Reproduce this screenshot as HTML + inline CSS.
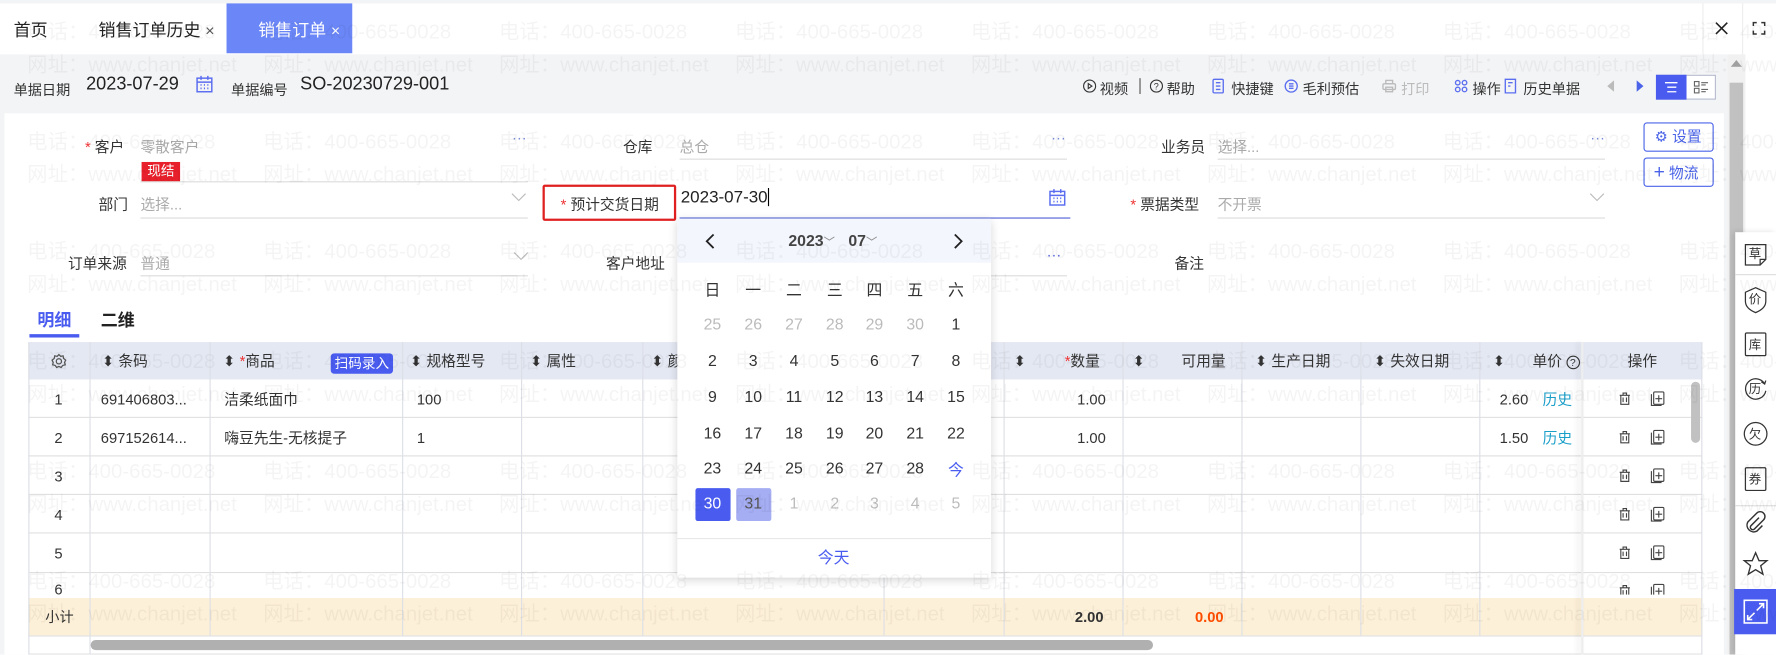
<!DOCTYPE html>
<html><head><meta charset="utf-8">
<style>
*{box-sizing:border-box;margin:0;padding:0}
html,body{width:1776px;height:654px;overflow:hidden;background:#fff}
body{font-family:"Liberation Sans","Noto Sans CJK SC",sans-serif;color:#333}
#w{position:absolute;left:0;top:0;width:1568px;height:578px;transform:scale(1.132653);transform-origin:0 0;overflow:hidden;background:#fff}
.a{position:absolute;white-space:nowrap}
.lbl{font-size:13px;color:#333}
.val{font-size:13px;color:#aaa}
.ul{position:absolute;height:1px;background:#dcdcdc}
.wm{position:absolute;left:0;width:1700px;font-size:18px;color:rgba(0,0,0,0.045);white-space:nowrap;pointer-events:none;z-index:50}
.wm span{display:inline-block;width:208.3px}
.th{position:absolute;top:302px;height:33px;font-size:13px;color:#333;line-height:33px}
.vl{position:absolute;width:1px;background:#dcdfe6}
.hl{position:absolute;height:1px;background:#e0e0e0}
.cd{position:absolute;width:30px;text-align:center;font-size:14px;color:#333}
.gr{color:#bbb}
.tb{font-size:12.5px;color:#333;position:absolute;top:68px}
.r{font-size:13px;line-height:16px;height:16px}
</style></head><body><div id="w">

<div class="a" style="left:0;top:0;width:1568px;height:3px;background:#f3f4f6"></div>
<div class="a" style="left:12px;top:16px;font-size:15px;color:#222">首页</div>
<div class="a" style="left:87px;top:16px;font-size:15px;color:#222">销售订单历史 <span style="font-size:14px;color:#555">×</span></div>
<div class="a" style="left:200px;top:3px;width:111px;height:44px;background:#6b86f7"></div>
<div class="a" style="left:228px;top:16px;font-size:15px;color:#fff">销售订单 <span style="font-size:14px">×</span></div>
<div class="a" style="left:1503px;top:3px;width:1px;height:45px;background:#eee"></div>
<div class="a" style="left:1538px;top:3px;width:1px;height:45px;background:#eee"></div>
<svg class="a" style="left:1514px;top:19px" width="12" height="12"><path d="M1 1L11 11M11 1L1 11" stroke="#222" stroke-width="1.4"/></svg>
<svg class="a" style="left:1547px;top:19px" width="12" height="12" fill="none" stroke="#333" stroke-width="1.3"><path d="M1 4V1H4M8 1H11V4M11 8V11H8M4 11H1V8"/></svg>

<div class="a" style="left:0;top:48px;width:1525px;height:530px;background:#f3f4f6"></div>
<div class="a lbl" style="left:12px;top:69px;font-size:12.5px">单据日期</div>
<div class="a" style="left:76px;top:66px;font-size:16px;color:#222">2023-07-29</div>
<svg class="a" style="left:173px;top:66px" width="15" height="16" fill="none" stroke="#5b6ef0" stroke-width="1.3"><rect x="1" y="3" width="13" height="12"/><path d="M1 6.5H14M4.5 1V4.5M10.5 1V4.5"/><path d="M4 9h1M7 9h1M10 9h1M4 12h1M7 12h1M10 12h1" stroke-width="1.5"/></svg>
<div class="ul" style="left:76px;top:103px;width:114px;background:#ccc"></div>
<div class="a lbl" style="left:204px;top:69px;font-size:12.5px">单据编号</div>
<div class="a" style="left:265px;top:66px;font-size:16px;color:#222">SO-20230729-001</div>

<svg class="a" style="left:956px;top:70px" width="12" height="12" fill="none" stroke="#333"><circle cx="6" cy="6" r="5.3"/><path d="M4.8 3.8L8 6 4.8 8.2Z"/></svg>
<div class="tb" style="left:971px">视频</div>
<div class="a" style="left:1006px;top:69px;width:1px;height:14px;background:#555"></div>
<svg class="a" style="left:1015px;top:70px" width="12" height="12" fill="none" stroke="#333"><circle cx="6" cy="6" r="5.3"/><text x="3.6" y="9" font-size="8" fill="#333" stroke="none">?</text></svg>
<div class="tb" style="left:1030px">帮助</div>
<svg class="a" style="left:1070px;top:69px" width="11" height="14" fill="none" stroke="#5b6ef0" stroke-width="1.2"><rect x="1" y="1" width="9" height="12" rx="1"/><path d="M3.5 4h4M3.5 7h4M3.5 10h4"/></svg>
<div class="tb" style="left:1087px">快捷键</div>
<svg class="a" style="left:1134px;top:70px" width="12" height="12" fill="none" stroke="#5b6ef0" stroke-width="1.2"><circle cx="6" cy="6" r="5.3"/><path d="M4 4h4M4 6h4M4 8h4"/></svg>
<div class="tb" style="left:1150px">毛利预估</div>
<svg class="a" style="left:1220px;top:70px" width="13" height="12" fill="none" stroke="#bbb" stroke-width="1.2"><rect x="1" y="4" width="11" height="5" rx="1"/><rect x="3.5" y="1" width="6" height="3"/><rect x="3.5" y="7" width="6" height="4"/></svg>
<div class="tb" style="left:1237px;color:#bbb">打印</div>
<svg class="a" style="left:1284px;top:70px" width="12" height="12" fill="none" stroke="#5b6ef0" stroke-width="1.2"><circle cx="3" cy="3" r="2"/><circle cx="9" cy="3" r="2"/><circle cx="3" cy="9" r="2"/><circle cx="9" cy="9" r="2"/></svg>
<div class="tb" style="left:1300px">操作</div>
<svg class="a" style="left:1328px;top:69px" width="11" height="14" fill="none" stroke="#5b6ef0" stroke-width="1.2"><path d="M1 1h9v12H1z M3.5 4h4M3.5 7h2"/></svg>
<div class="tb" style="left:1345px">历史单据</div>
<svg class="a" style="left:1418px;top:70px" width="8" height="12"><path d="M7 1L1 6 7 11Z" fill="#bbb"/></svg>
<svg class="a" style="left:1444px;top:70px" width="8" height="12"><path d="M1 1L7 6 1 11Z" fill="#4a63e8"/></svg>
<div class="a" style="left:1462px;top:66px;width:53px;height:22px;border:1px solid #b8bdd0;background:#fff"></div>
<div class="a" style="left:1462px;top:66px;width:27px;height:22px;background:#4a5cf0"></div>
<svg class="a" style="left:1469px;top:71px" width="13" height="12" stroke="#fff" stroke-width="1.2"><path d="M1 2h11M3 6h8M3 10h8"/></svg>
<svg class="a" style="left:1495px;top:71px" width="14" height="12" fill="none" stroke="#666" stroke-width="1"><rect x="1" y="1" width="4" height="4"/><rect x="1" y="7" width="4" height="4"/><path d="M7 2h6M7 4h4M7 8h6M7 10h4"/></svg>

<div class="a" style="left:1525px;top:48px;width:16px;height:530px;background:#f1f1f1"></div>
<svg class="a" style="left:1528px;top:53px" width="10" height="6"><path d="M0 6L5 0 10 6Z" fill="#a0a0a0"/></svg>
<div class="a" style="left:1527px;top:73px;width:12px;height:505px;background:#c1c1c1"></div>
<div class="a" style="left:1532px;top:205px;width:36px;height:373px;background:#fff;box-shadow:-2px 0 5px rgba(0,0,0,.12)"></div>
<div class="a" style="left:1532px;top:242px;width:36px;height:1px;background:#ddd"></div>
<div class="a" style="left:1532px;top:446px;width:36px;height:1px;background:#ddd"></div>
<svg class="a" style="left:1538px;top:213px" width="24" height="24" fill="none" stroke="#333" stroke-width="1.1"><path d="M3 3h18v13l-5 5H3z"/><path d="M16 21v-5h5"/><text x="6" y="15" font-size="11" fill="#333" stroke="none">草</text></svg>
<svg class="a" style="left:1538px;top:252px" width="24" height="26" fill="none" stroke="#333" stroke-width="1.1"><path d="M12 2l9 4v8c0 5-4 8-9 10-5-2-9-5-9-10V6z"/><text x="6" y="16" font-size="11" fill="#333" stroke="none">价</text></svg>
<svg class="a" style="left:1538px;top:292px" width="24" height="24" fill="none" stroke="#333" stroke-width="1.1"><rect x="3" y="2" width="18" height="20" rx="1"/><text x="6" y="16" font-size="11" fill="#333" stroke="none">库</text></svg>
<svg class="a" style="left:1538px;top:331px" width="24" height="24" fill="none" stroke="#333" stroke-width="1.1"><path d="M20 8a9 9 0 1 0 1 6"/><path d="M17 6l3 2 1-3"/><text x="6" y="16" font-size="11" fill="#333" stroke="none">历</text></svg>
<svg class="a" style="left:1538px;top:371px" width="24" height="24" fill="none" stroke="#333" stroke-width="1.1"><circle cx="12" cy="12" r="10"/><text x="6" y="16" font-size="11" fill="#333" stroke="none">欠</text></svg>
<svg class="a" style="left:1538px;top:411px" width="24" height="24" fill="none" stroke="#333" stroke-width="1.1"><rect x="3" y="2" width="18" height="20" rx="1"/><text x="6" y="16" font-size="11" fill="#333" stroke="none">券</text></svg>
<svg class="a" style="left:1538px;top:450px" width="24" height="24" fill="none" stroke="#333" stroke-width="1.3"><path d="M15 7l-7 7a2 2 0 0 0 3 3l8-8a4 4 0 0 0-6-6L5 11a6 6 0 0 0 8 8l5-5"/></svg>
<svg class="a" style="left:1538px;top:486px" width="24" height="24" fill="none" stroke="#333" stroke-width="1.2"><path d="M12 2l3 7h7l-5.5 4.5 2 7.5L12 17l-6.5 4 2-7.5L2 9h7z"/></svg>
<div class="a" style="left:1531px;top:520px;width:37px;height:40px;background:#4a5cf0"></div>
<svg class="a" style="left:1538px;top:528px" width="24" height="24" fill="none" stroke="#fff" stroke-width="1.4"><rect x="2" y="2" width="20" height="20"/><path d="M13 11l6-6M15 5h4v4M11 13l-6 6M5 15v4h4"/></svg>

<div class="a" style="left:4px;top:100px;width:1518px;height:478px;background:#fff"></div>

<div class="a lbl" style="left:75px;top:119px"><span style="color:#e33">*</span> 客户</div>
<div class="a val" style="left:124px;top:119px">零散客户</div>
<div class="a" style="left:452px;top:114px;color:#7a8bd8;font-size:13px">···</div>
<div class="ul" style="left:124px;top:160px;width:342px"></div>
<div class="a" style="left:125px;top:143px;width:34px;height:17px;background:#e8202b;color:#fff;font-size:12px;line-height:17px;text-align:center">现结</div>
<div class="a lbl" style="left:550px;top:119px">仓库</div>
<div class="a val" style="left:600px;top:119px">总仓</div>
<div class="a" style="left:928px;top:114px;color:#7a8bd8;font-size:13px">···</div>
<div class="ul" style="left:600px;top:140px;width:342px"></div>
<div class="a lbl" style="left:1025px;top:119px">业务员</div>
<div class="a val" style="left:1075px;top:119px">选择...</div>
<div class="a" style="left:1404px;top:114px;color:#7a8bd8;font-size:13px">···</div>
<div class="ul" style="left:1075px;top:140px;width:342px"></div>
<div class="a" style="left:1451px;top:108px;width:62px;height:26px;border:1px solid #4a63e8;border-radius:3px;color:#4a63e8;font-size:13px;line-height:24px;padding-left:9px">⚙ 设置</div>
<div class="a" style="left:1451px;top:139px;width:62px;height:26px;border:1px solid #4a63e8;border-radius:3px;color:#4a63e8;font-size:13px;line-height:24px;padding-left:8px"><span style="font-size:17px">+</span> 物流</div>

<div class="a lbl" style="left:87px;top:170px">部门</div>
<div class="a val" style="left:124px;top:170px">选择...</div>
<svg class="a" style="left:451px;top:170px" width="14" height="9"><path d="M1 1l6 6 6-6" fill="none" stroke="#bbb"/></svg>
<div class="ul" style="left:124px;top:192px;width:342px"></div>
<div class="a" style="left:479px;top:163px;width:118px;height:32px;border:2px solid #e02020;border-radius:2px"></div>
<div class="a lbl" style="left:495px;top:170px"><span style="color:#e33">*</span> 预计交货日期</div>
<div class="a" style="left:601px;top:166px;font-size:15px;color:#222">2023-07-30<span style="display:inline-block;width:1px;height:16px;background:#000;vertical-align:-3px"></span></div>
<svg class="a" style="left:926px;top:166px" width="15" height="16" fill="none" stroke="#5b6ef0" stroke-width="1.3"><rect x="1" y="3" width="13" height="12"/><path d="M1 6.5H14M4.5 1V4.5M10.5 1V4.5"/><path d="M4 9h1M7 9h1M10 9h1M4 12h1M7 12h1M10 12h1" stroke-width="1.5"/></svg>
<div class="ul" style="left:600px;top:192px;width:345px;background:#5060d8"></div>
<div class="a lbl" style="left:998px;top:170px"><span style="color:#e33">*</span> 票据类型</div>
<div class="a val" style="left:1075px;top:170px">不开票</div>
<svg class="a" style="left:1403px;top:170px" width="14" height="9"><path d="M1 1l6 6 6-6" fill="none" stroke="#bbb"/></svg>
<div class="ul" style="left:1075px;top:192px;width:342px"></div>

<div class="a lbl" style="left:60px;top:222px">订单来源</div>
<div class="a val" style="left:124px;top:222px">普通</div>
<svg class="a" style="left:453px;top:222px" width="14" height="9"><path d="M1 1l6 6 6-6" fill="none" stroke="#bbb"/></svg>
<div class="ul" style="left:124px;top:243px;width:342px"></div>
<div class="a lbl" style="left:535px;top:222px">客户地址</div>
<div class="a" style="left:924px;top:217px;color:#5060d8;font-size:13px">···</div>
<div class="ul" style="left:600px;top:243px;width:342px"></div>
<div class="a lbl" style="left:1037px;top:222px">备注</div>

<div class="a" style="left:33px;top:272px;font-size:15px;font-weight:bold;color:#4a5cf0">明细</div>
<div class="a" style="left:26px;top:295px;width:44px;height:3px;background:#4a5cf0"></div>
<div class="a" style="left:89px;top:272px;font-size:15px;font-weight:bold;color:#222">二维</div>

<div class="a" style="left:25px;top:302px;width:1478px;height:33px;background:#e4e8f3"></div>
<div class="a" style="left:25px;top:528px;width:1478px;height:33px;background:#fdf0d8"></div>
<div class="hl" style="left:25px;top:368px;width:1478px"></div>
<div class="hl" style="left:25px;top:402px;width:1478px"></div>
<div class="hl" style="left:25px;top:436px;width:1478px"></div>
<div class="hl" style="left:25px;top:470px;width:1478px"></div>
<div class="hl" style="left:25px;top:505px;width:1478px"></div>
<div class="hl" style="left:25px;top:561px;width:1478px"></div>
<div class="hl" style="left:25px;top:577px;width:1478px"></div>
<div class="vl" style="left:25px;top:302px;height:276px"></div>
<div class="vl" style="left:79px;top:302px;height:276px"></div>
<div class="vl" style="left:185px;top:302px;height:259px"></div>
<div class="vl" style="left:355px;top:302px;height:259px"></div>
<div class="vl" style="left:460px;top:302px;height:259px"></div>
<div class="vl" style="left:567px;top:302px;height:259px"></div>
<div class="vl" style="left:780px;top:302px;height:259px"></div>
<div class="vl" style="left:886px;top:302px;height:259px"></div>
<div class="vl" style="left:991px;top:302px;height:259px"></div>
<div class="vl" style="left:1096px;top:302px;height:259px"></div>
<div class="vl" style="left:1201px;top:302px;height:259px"></div>
<div class="vl" style="left:1306px;top:302px;height:259px"></div>
<div class="vl" style="left:1502px;top:302px;height:276px"></div>
<div class="a" style="left:1396px;top:302px;width:2px;height:276px;box-shadow:-3px 0 5px rgba(0,0,0,.1);background:#eee"></div>

<svg class="a" style="left:45px;top:312px" width="14" height="14" fill="none" stroke="#555" stroke-width="1.1"><circle cx="7" cy="7" r="2.3"/><path d="M7 1l1.5 1.6 2.2-.4.4 2.2L13 6l-1 2 .6 2.1-2.2.5L9 12.4 7 11.5 5 12.4l-1.3-1.8-2.2-.5L2 8 1 6l1.9-1.6.4-2.2 2.2.4z"/></svg>
<div class="th" style="left:90px">⬍ 条码</div>
<div class="th" style="left:197px">⬍ <span style="color:#e33">*</span>商品</div>
<div class="a" style="left:292px;top:312px;width:55px;height:18px;background:#4a5cf0;border-radius:3px;color:#fff;font-size:12px;line-height:18px;text-align:center">扫码录入</div>
<div class="th" style="left:362px">⬍ 规格型号</div>
<div class="th" style="left:468px">⬍ 属性</div>
<div class="th" style="left:575px">⬍ 颜</div>
<div class="th" style="left:895px">⬍</div>
<div class="th" style="left:940px"><span style="color:#e33">*</span>数量</div>
<div class="th" style="left:1000px">⬍</div>
<div class="th" style="left:1043px">可用量</div>
<div class="th" style="left:1108px">⬍ 生产日期</div>
<div class="th" style="left:1213px">⬍ 失效日期</div>
<div class="th" style="left:1318px">⬍</div>
<div class="th" style="left:1353px">单价 <span style="display:inline-block;width:12px;height:12px;border:1px solid #333;border-radius:50%;font-size:9px;line-height:10px;text-align:center;vertical-align:0">?</span></div>
<div class="th" style="left:1437px">操作</div>

<div class="a r" style="left:48px;top:345px">1</div>
<div class="a r" style="left:48px;top:379px">2</div>
<div class="a r" style="left:48px;top:413px">3</div>
<div class="a r" style="left:48px;top:447px">4</div>
<div class="a r" style="left:48px;top:481px">5</div>
<div class="a r" style="left:48px;top:513px">6</div>
<div class="a r" style="left:89px;top:345px">691406803...</div>
<div class="a r" style="left:89px;top:379px">697152614...</div>
<div class="a r" style="left:198px;top:345px">洁柔纸面巾</div>
<div class="a r" style="left:198px;top:379px">嗨豆先生-无核提子</div>
<div class="a r" style="left:368px;top:345px">100</div>
<div class="a r" style="left:368px;top:379px">1</div>
<div class="a r" style="left:951px;top:345px">1.00</div>
<div class="a r" style="left:951px;top:379px">1.00</div>
<div class="a r" style="left:1324px;top:345px">2.60</div>
<div class="a r" style="left:1324px;top:379px">1.50</div>
<div class="a r" style="left:1362px;top:345px;color:#1a9fc9">历史</div>
<div class="a r" style="left:1362px;top:379px;color:#1a9fc9">历史</div>
<div class="a r" style="left:40px;top:537px;font-size:12.5px">小计</div>
<div class="a r" style="left:949px;top:537px;font-weight:bold">2.00</div>
<div class="a r" style="left:1055px;top:537px;font-weight:bold;color:#ff4d00">0.00</div>
<div class="a" style="left:80px;top:565px;width:938px;height:9px;border-radius:5px;background:#b0b0b0"></div>
<div class="a" style="left:1493px;top:337px;width:8px;height:54px;border-radius:4px;background:#c1c1c1"></div>

<svg class="a" style="left:1428px;top:345px" width="44" height="180" fill="none" stroke="#444" stroke-width="1">
<g id="op"><path d="M2 4h9M5 4V2h3v2M3 4v8h7V4M5 6v4M8 6v4"/><rect x="32" y="1" width="9" height="11" rx="1"/><path d="M30 3v10h9M36.5 4v6M33.5 7h6"/></g>
<use href="#op" y="34"/><use href="#op" y="68"/><use href="#op" y="102"/><use href="#op" y="136"/><use href="#op" y="170"/>
</svg>

<div class="a" style="left:598px;top:193px;width:277px;height:317px;background:#fff;box-shadow:0 2px 8px rgba(0,0,0,.18);z-index:20">
 <div class="a" style="left:0;top:0;width:277px;height:39px;background:#f3f6fd"></div>
 <svg class="a" style="left:24px;top:13px" width="9" height="14"><path d="M8 1L2 7l6 6" fill="none" stroke="#222" stroke-width="1.6"/></svg>
 <svg class="a" style="left:244px;top:13px" width="9" height="14"><path d="M1 1l6 6-6 6" fill="none" stroke="#222" stroke-width="1.6"/></svg>
 <div class="a" style="left:98px;top:11px;font-size:14px;font-weight:bold;color:#444">2023<span style="font-weight:normal;font-size:10px;color:#888">﹀</span></div>
 <div class="a" style="left:151px;top:11px;font-size:14px;font-weight:bold;color:#444">07<span style="font-weight:normal;font-size:10px;color:#888">﹀</span></div>
 <div class="cd" style="left:16px;top:53px">日</div><div class="cd" style="left:52px;top:53px">一</div><div class="cd" style="left:88px;top:53px">二</div><div class="cd" style="left:124px;top:53px">三</div><div class="cd" style="left:159px;top:53px">四</div><div class="cd" style="left:195px;top:53px">五</div><div class="cd" style="left:231px;top:53px">六</div>
 <div class="cd gr" style="left:16px;top:85px">25</div><div class="cd gr" style="left:52px;top:85px">26</div><div class="cd gr" style="left:88px;top:85px">27</div><div class="cd gr" style="left:124px;top:85px">28</div><div class="cd gr" style="left:159px;top:85px">29</div><div class="cd gr" style="left:195px;top:85px">30</div><div class="cd" style="left:231px;top:85px">1</div>
 <div class="cd" style="left:16px;top:117px">2</div><div class="cd" style="left:52px;top:117px">3</div><div class="cd" style="left:88px;top:117px">4</div><div class="cd" style="left:124px;top:117px">5</div><div class="cd" style="left:159px;top:117px">6</div><div class="cd" style="left:195px;top:117px">7</div><div class="cd" style="left:231px;top:117px">8</div>
 <div class="cd" style="left:16px;top:149px">9</div><div class="cd" style="left:52px;top:149px">10</div><div class="cd" style="left:88px;top:149px">11</div><div class="cd" style="left:124px;top:149px">12</div><div class="cd" style="left:159px;top:149px">13</div><div class="cd" style="left:195px;top:149px">14</div><div class="cd" style="left:231px;top:149px">15</div>
 <div class="cd" style="left:16px;top:181px">16</div><div class="cd" style="left:52px;top:181px">17</div><div class="cd" style="left:88px;top:181px">18</div><div class="cd" style="left:124px;top:181px">19</div><div class="cd" style="left:159px;top:181px">20</div><div class="cd" style="left:195px;top:181px">21</div><div class="cd" style="left:231px;top:181px">22</div>
 <div class="cd" style="left:16px;top:212px">23</div><div class="cd" style="left:52px;top:212px">24</div><div class="cd" style="left:88px;top:212px">25</div><div class="cd" style="left:124px;top:212px">26</div><div class="cd" style="left:159px;top:212px">27</div><div class="cd" style="left:195px;top:212px">28</div><div class="cd" style="left:231px;top:212px;color:#4a5cf0">今</div>
 <div class="a" style="left:16px;top:238px;width:31px;height:29px;background:#4a5cf0;border-radius:2px"></div>
 <div class="a" style="left:52px;top:238px;width:31px;height:29px;background:#a5adf3;border-radius:2px"></div>
 <div class="cd" style="left:16px;top:243px;color:#fff">30</div><div class="cd" style="left:52px;top:243px;color:#555">31</div><div class="cd gr" style="left:88px;top:243px">1</div><div class="cd gr" style="left:124px;top:243px">2</div><div class="cd gr" style="left:159px;top:243px">3</div><div class="cd gr" style="left:195px;top:243px">4</div><div class="cd gr" style="left:231px;top:243px">5</div>
 <div class="a" style="left:0;top:282px;width:277px;height:1px;background:#e8e8e8"></div>
 <div class="a" style="left:124px;top:289px;font-size:14px;color:#4a5cf0">今天</div>
</div>

<div class="wm" style="top:14px;left:24px"><span>电话：400-665-0028</span><span>电话：400-665-0028</span><span>电话：400-665-0028</span><span>电话：400-665-0028</span><span>电话：400-665-0028</span><span>电话：400-665-0028</span><span>电话：400-665-0028</span><span>电话：400-665-0028</span></div>
<div class="wm" style="top:43px;left:24px"><span>网址：www.chanjet.net</span><span>网址：www.chanjet.net</span><span>网址：www.chanjet.net</span><span>网址：www.chanjet.net</span><span>网址：www.chanjet.net</span><span>网址：www.chanjet.net</span><span>网址：www.chanjet.net</span><span>网址：www.chanjet.net</span></div>
<div class="wm" style="top:111px;left:24px"><span>电话：400-665-0028</span><span>电话：400-665-0028</span><span>电话：400-665-0028</span><span>电话：400-665-0028</span><span>电话：400-665-0028</span><span>电话：400-665-0028</span><span>电话：400-665-0028</span><span>电话：400-665-0028</span></div>
<div class="wm" style="top:140px;left:24px"><span>网址：www.chanjet.net</span><span>网址：www.chanjet.net</span><span>网址：www.chanjet.net</span><span>网址：www.chanjet.net</span><span>网址：www.chanjet.net</span><span>网址：www.chanjet.net</span><span>网址：www.chanjet.net</span><span>网址：www.chanjet.net</span></div>
<div class="wm" style="top:208px;left:24px"><span>电话：400-665-0028</span><span>电话：400-665-0028</span><span>电话：400-665-0028</span><span>电话：400-665-0028</span><span>电话：400-665-0028</span><span>电话：400-665-0028</span><span>电话：400-665-0028</span><span>电话：400-665-0028</span></div>
<div class="wm" style="top:237px;left:24px"><span>网址：www.chanjet.net</span><span>网址：www.chanjet.net</span><span>网址：www.chanjet.net</span><span>网址：www.chanjet.net</span><span>网址：www.chanjet.net</span><span>网址：www.chanjet.net</span><span>网址：www.chanjet.net</span><span>网址：www.chanjet.net</span></div>
<div class="wm" style="top:305px;left:24px"><span>电话：400-665-0028</span><span>电话：400-665-0028</span><span>电话：400-665-0028</span><span>电话：400-665-0028</span><span>电话：400-665-0028</span><span>电话：400-665-0028</span><span>电话：400-665-0028</span><span>电话：400-665-0028</span></div>
<div class="wm" style="top:334px;left:24px"><span>网址：www.chanjet.net</span><span>网址：www.chanjet.net</span><span>网址：www.chanjet.net</span><span>网址：www.chanjet.net</span><span>网址：www.chanjet.net</span><span>网址：www.chanjet.net</span><span>网址：www.chanjet.net</span><span>网址：www.chanjet.net</span></div>
<div class="wm" style="top:402px;left:24px"><span>电话：400-665-0028</span><span>电话：400-665-0028</span><span>电话：400-665-0028</span><span>电话：400-665-0028</span><span>电话：400-665-0028</span><span>电话：400-665-0028</span><span>电话：400-665-0028</span><span>电话：400-665-0028</span></div>
<div class="wm" style="top:431px;left:24px"><span>网址：www.chanjet.net</span><span>网址：www.chanjet.net</span><span>网址：www.chanjet.net</span><span>网址：www.chanjet.net</span><span>网址：www.chanjet.net</span><span>网址：www.chanjet.net</span><span>网址：www.chanjet.net</span><span>网址：www.chanjet.net</span></div>
<div class="wm" style="top:499px;left:24px"><span>电话：400-665-0028</span><span>电话：400-665-0028</span><span>电话：400-665-0028</span><span>电话：400-665-0028</span><span>电话：400-665-0028</span><span>电话：400-665-0028</span><span>电话：400-665-0028</span><span>电话：400-665-0028</span></div>
<div class="wm" style="top:528px;left:24px"><span>网址：www.chanjet.net</span><span>网址：www.chanjet.net</span><span>网址：www.chanjet.net</span><span>网址：www.chanjet.net</span><span>网址：www.chanjet.net</span><span>网址：www.chanjet.net</span><span>网址：www.chanjet.net</span><span>网址：www.chanjet.net</span></div>

</div></body></html>
